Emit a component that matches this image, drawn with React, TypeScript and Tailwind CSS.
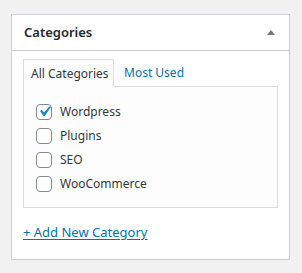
import React from "react";

const items = [
  { label: "Wordpress", checked: true },
  { label: "Plugins", checked: false },
  { label: "SEO", checked: false },
  { label: "WooCommerce", checked: false },
];

function Box({ checked }: { checked: boolean }) {
  return (
    <span className="w-4 h-4 shrink-0 rounded-[4px] border border-[#7e8993] bg-white flex items-center justify-center overflow-visible">
      {checked && (
        <svg width="21" height="21" viewBox="0 0 20 20" className="shrink-0 -mt-[1px]">
          <path d="M14.83 4.89l1.34.94-5.81 8.38H9.02L5.78 9.67l1.34-1.25 2.57 2.4z" fill="#1e8cbe" />
        </svg>
      )}
    </span>
  );
}

export default function App() {
  return (
    <div className="w-[302px] h-[273px] bg-[#f1f1f1] pt-[14px] pl-[11px]" style={{ fontFamily: '"Noto Sans", "Open Sans", sans-serif' }}>
      <div className="w-[279px] h-[246px] bg-white border border-[#ccd0d4] flex flex-col">
        <div className="h-[36px] border-b border-[#ccd0d4] flex items-center justify-between pl-[12px] pr-[14px]">
          <span className="text-[13px] font-semibold text-[#23282d]">Categories</span>
          <svg width="8" height="5" viewBox="0 0 8 5"><path d="M0 5L4 0L8 5Z" fill="#72777c" /></svg>
        </div>
        <div className="px-[11px] pt-[8px]">
          <div className="flex items-end">
            <div className="h-[28px] w-[91px] pl-[7px] border border-[#dcdcde] border-b-0 bg-[#fdfdfd] text-[12px] text-[#32373c] flex items-center relative z-10 -mb-px">All Categories</div>
            <div className="h-[27px] pl-[10px] text-[12px] text-[#0073aa] flex items-center">Most Used</div>
          </div>
          <div className="h-[122px] border border-[#dcdcde] bg-[#fdfdfd] pt-[17px] pl-[12px] flex flex-col gap-[8px]">
            {items.map((it) => (
              <div key={it.label} className="flex items-center gap-[8px] h-4">
                <Box checked={it.checked} />
                <span className="text-[12px] text-[#32373c]">{it.label}</span>
              </div>
            ))}
          </div>
          <div className="mt-[11px]">
            <a className="text-[13px] text-[#0073aa] underline underline-offset-2">+ Add New Category</a>
          </div>
        </div>
      </div>
    </div>
  );
}
